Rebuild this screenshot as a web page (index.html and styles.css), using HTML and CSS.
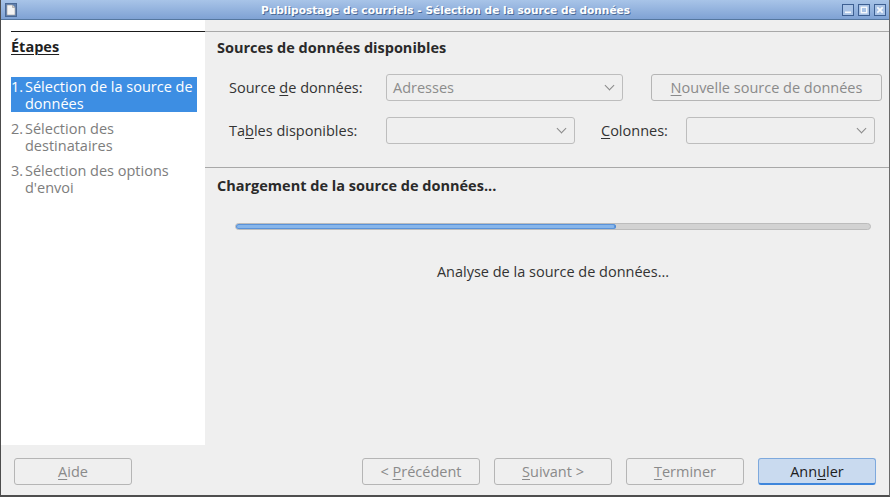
FILE: index.html
```html
<!DOCTYPE html>
<html lang="fr">
<head>
<meta charset="utf-8">
<title>Publipostage de courriels</title>
<link rel="stylesheet" href="styles.css">
</head>
<body>
<div class="window">
  <div class="titlebar">
    <span class="app-icon">
      <svg width="12" height="14" viewBox="0 0 12 14"><rect x="0.5" y="0.5" width="11" height="13" fill="#5f7fae" stroke="#4a6894"/><path d="M2 2 H7.5 L10 4.5 V12 H2 Z" fill="#f4f4f4" stroke="#9a9a9a" stroke-width="0.6"/><path d="M7.5 2 V4.5 H10" fill="#cfcfcf" stroke="#9a9a9a" stroke-width="0.6"/></svg>
    </span>
    <span class="title">Publipostage de courriels - Sélection de la source de données</span>
    <span class="controls">
      <span class="ctl"><svg width="12" height="12" viewBox="0 0 12 12"><rect x="0.5" y="0.5" width="11" height="11" fill="#a9c3e6" stroke="#3d5f92"/><rect x="3" y="7.5" width="6" height="1.6" fill="#f5f8fc"/></svg></span>
      <span class="ctl"><svg width="12" height="12" viewBox="0 0 12 12"><rect x="0.5" y="0.5" width="11" height="11" fill="#a9c3e6" stroke="#3d5f92"/><rect x="3.3" y="3.3" width="5.4" height="5.4" fill="none" stroke="#f5f8fc" stroke-width="1.4"/></svg></span>
      <span class="ctl"><svg width="12" height="12" viewBox="0 0 12 12"><rect x="0.5" y="0.5" width="11" height="11" fill="#a9c3e6" stroke="#3d5f92"/><path d="M3.3 3.3 L8.7 8.7 M8.7 3.3 L3.3 8.7" stroke="#f5f8fc" stroke-width="1.8"/></svg></span>
    </span>
  </div>

  <div class="body">
    <aside class="sidebar">
      <div class="side-rule"></div>
      <div class="side-head"><u>Étapes</u></div>
      <ol class="steps">
        <li class="step active"><span class="num">1.</span><span class="txt">Sélection de la source de données</span></li>
        <li class="step"><span class="num">2.</span><span class="txt">Sélection des destinataires</span></li>
        <li class="step"><span class="num">3.</span><span class="txt">Sélection des options d'envoi</span></li>
      </ol>
    </aside>

    <main class="main">
      <div class="main-rule"></div>
      <h2 class="section-title">Sources de données disponibles</h2>
      <div class="form">
        <div class="row">
          <label class="lbl lbl-wide">Source <u>d</u>e données:</label>
          <div class="combo combo-wide"><span class="combo-text">Adresses</span><span class="chev"></span></div>
          <button class="btn btn-new"><u>N</u>ouvelle source de données</button>
        </div>
        <div class="row">
          <label class="lbl lbl-wide">Ta<u>b</u>les disponibles:</label>
          <div class="combo combo-narrow"><span class="combo-text"></span><span class="chev"></span></div>
          <label class="lbl lbl-col"><u>C</u>olonnes:</label>
          <div class="combo combo-narrow"><span class="combo-text"></span><span class="chev"></span></div>
        </div>
      </div>
      <div class="sep"></div>
      <h2 class="section-title load-title">Chargement de la source de données...</h2>
      <div class="progress-area">
        <div class="progress"><div class="fill" style="width:60%"></div></div>
        <div class="status">Analyse de la source de données...</div>
      </div>
    </main>
  </div>

  <div class="footer">
    <button class="btn fbtn"><u>A</u>ide</button>
    <div class="spacer"></div>
    <button class="btn fbtn">&lt; <u>P</u>récédent</button>
    <button class="btn fbtn"><u>S</u>uivant &gt;</button>
    <button class="btn fbtn"><u>T</u>erminer</button>
    <button class="btn fbtn default">Ann<u>u</u>ler</button>
  </div>
</div>
</body>
</html>
```
FILE: styles.css
```css
* { box-sizing: border-box; }
html, body { margin: 0; padding: 0; }
body {
  width: 890px;
  height: 497px;
  overflow: hidden;
  font-family: "Open Sans", "Noto Sans", sans-serif;
  font-size: 14.5px;
  color: #3a3a3a;
  background: #efefef;
}
u { text-decoration-thickness: 1px; text-underline-offset: 2px; }

.window {
  width: 890px;
  height: 497px;
  display: flex;
  flex-direction: column;
  border-left: 1px solid #4c4c4c;
  border-right: 1px solid #6a6a6a;
  border-bottom: 2px solid #4e4e4e;
  background: #efefef;
}

.titlebar {
  height: 20px;
  flex: none;
  display: flex;
  align-items: center;
  background: linear-gradient(#a8c4e8, #7fa2d4);
  border-bottom: 1px solid #55779f;
  padding: 0 3px 0 4px;
}
.app-icon { display: flex; width: 44px; height: 14px; }
.title {
  flex: 1;
  text-align: center;
  font-family: "DejaVu Sans", sans-serif;
  font-weight: bold;
  font-size: 10.6px;
  color: #ffffff;
  text-shadow: 1px 1px 0 #4b6a97;
}
.controls { display: flex; gap: 4px; width: 44px; }
.ctl { display: flex; width: 12px; height: 12px; }

.body {
  flex: 1;
  display: flex;
  min-height: 0;
}

.sidebar {
  width: 204px;
  flex: none;
  background: #ffffff;
  padding-top: 11px;
  padding-left: 10px;
  padding-right: 8px;
}
.side-rule { height: 1px; background: #1a1a1a; margin-right: -8px; }
.side-head {
  margin-top: 6px;
  line-height: 17px;
  font-weight: bold;
  color: #1f1f1f;
}
.steps { list-style: none; margin: 22px 0 0; padding: 0; }
.step {
  display: flex;
  line-height: 17px;
  color: #7d7d7d;
  padding: 1px 0 0;
  margin-bottom: 7px;
}
.step .num { width: 14px; flex: none; }
.step .txt { flex: 1; }
.step.active {
  background: #3d8ee3;
  color: #ffffff;
  height: 35px;
}

.main {
  flex: 1;
  padding-top: 11px;
  display: flex;
  flex-direction: column;
}
.main-rule { height: 1px; background: #a8a8a8; }
.section-title {
  margin: 7px 0 0 12px;
  font-size: 14.5px;
  line-height: 17px;
  font-weight: bold;
  color: #2a2a2a;
}

.form {
  margin-top: 18px;
  padding-left: 24px;
  display: flex;
  flex-direction: column;
  gap: 16px;
}
.row { display: flex; align-items: center; height: 27px; }
.lbl { color: #333333; line-height: 17px; }
.lbl-wide { width: 157px; flex: none; }
.lbl-col { width: 85px; margin-left: 26px; flex: none; }

.combo {
  height: 27px;
  border: 1px solid #bdbdbd;
  border-radius: 3px;
  background: #efefef;
  display: flex;
  align-items: center;
  padding: 0 9px 0 6px;
  flex: none;
}
.combo-wide { width: 237px; }
.combo-narrow { width: 189px; }
.combo-text { flex: 1; color: #8c8c8c; }
.chev {
  width: 7px;
  height: 7px;
  border-right: 1px solid #8a8a8a;
  border-bottom: 1px solid #8a8a8a;
  transform: rotate(45deg);
  margin-top: -4px;
}

.btn {
  font: inherit;
  font-size: 14.5px;
  height: 27px;
  border: 1px solid #b5b5b5;
  border-radius: 3px;
  background: #efefef;
  color: #8a8a8a;
  padding: 0;
  line-height: 17px;
}
.btn-new { width: 231px; margin-left: 28px; }

.sep { height: 1px; background: #a8a8a8; margin-top: 23px; }
.load-title { margin-top: 9px; }

.progress-area {
  margin: 29px 18px 0 30px;
  display: flex;
  flex-direction: column;
}
.progress {
  height: 7px;
  border: 1px solid #bcbcbc;
  border-radius: 4px;
  background: #d2d2d2;
  overflow: hidden;
}
.fill {
  height: 100%;
  background: #88b6ea;
  border-right: 1px solid #4d88d2;
  box-shadow: inset 0 0 0 1px #5a93da;
  border-radius: 3px;
}
.status {
  margin-top: 33px;
  text-align: center;
  line-height: 17px;
  color: #333333;
}

.footer {
  height: 50px;
  flex: none;
  display: flex;
  padding: 13px 13px 0 13px;
  gap: 14px;
  align-items: flex-start;
}
.spacer { flex: 1; }
.fbtn { width: 118px; }
.fbtn.default {
  background: #c9daef;
  border-color: #7ea9dd;
  border-bottom: 2px solid #3f86db;
  color: #1d1d1d;
}
```
